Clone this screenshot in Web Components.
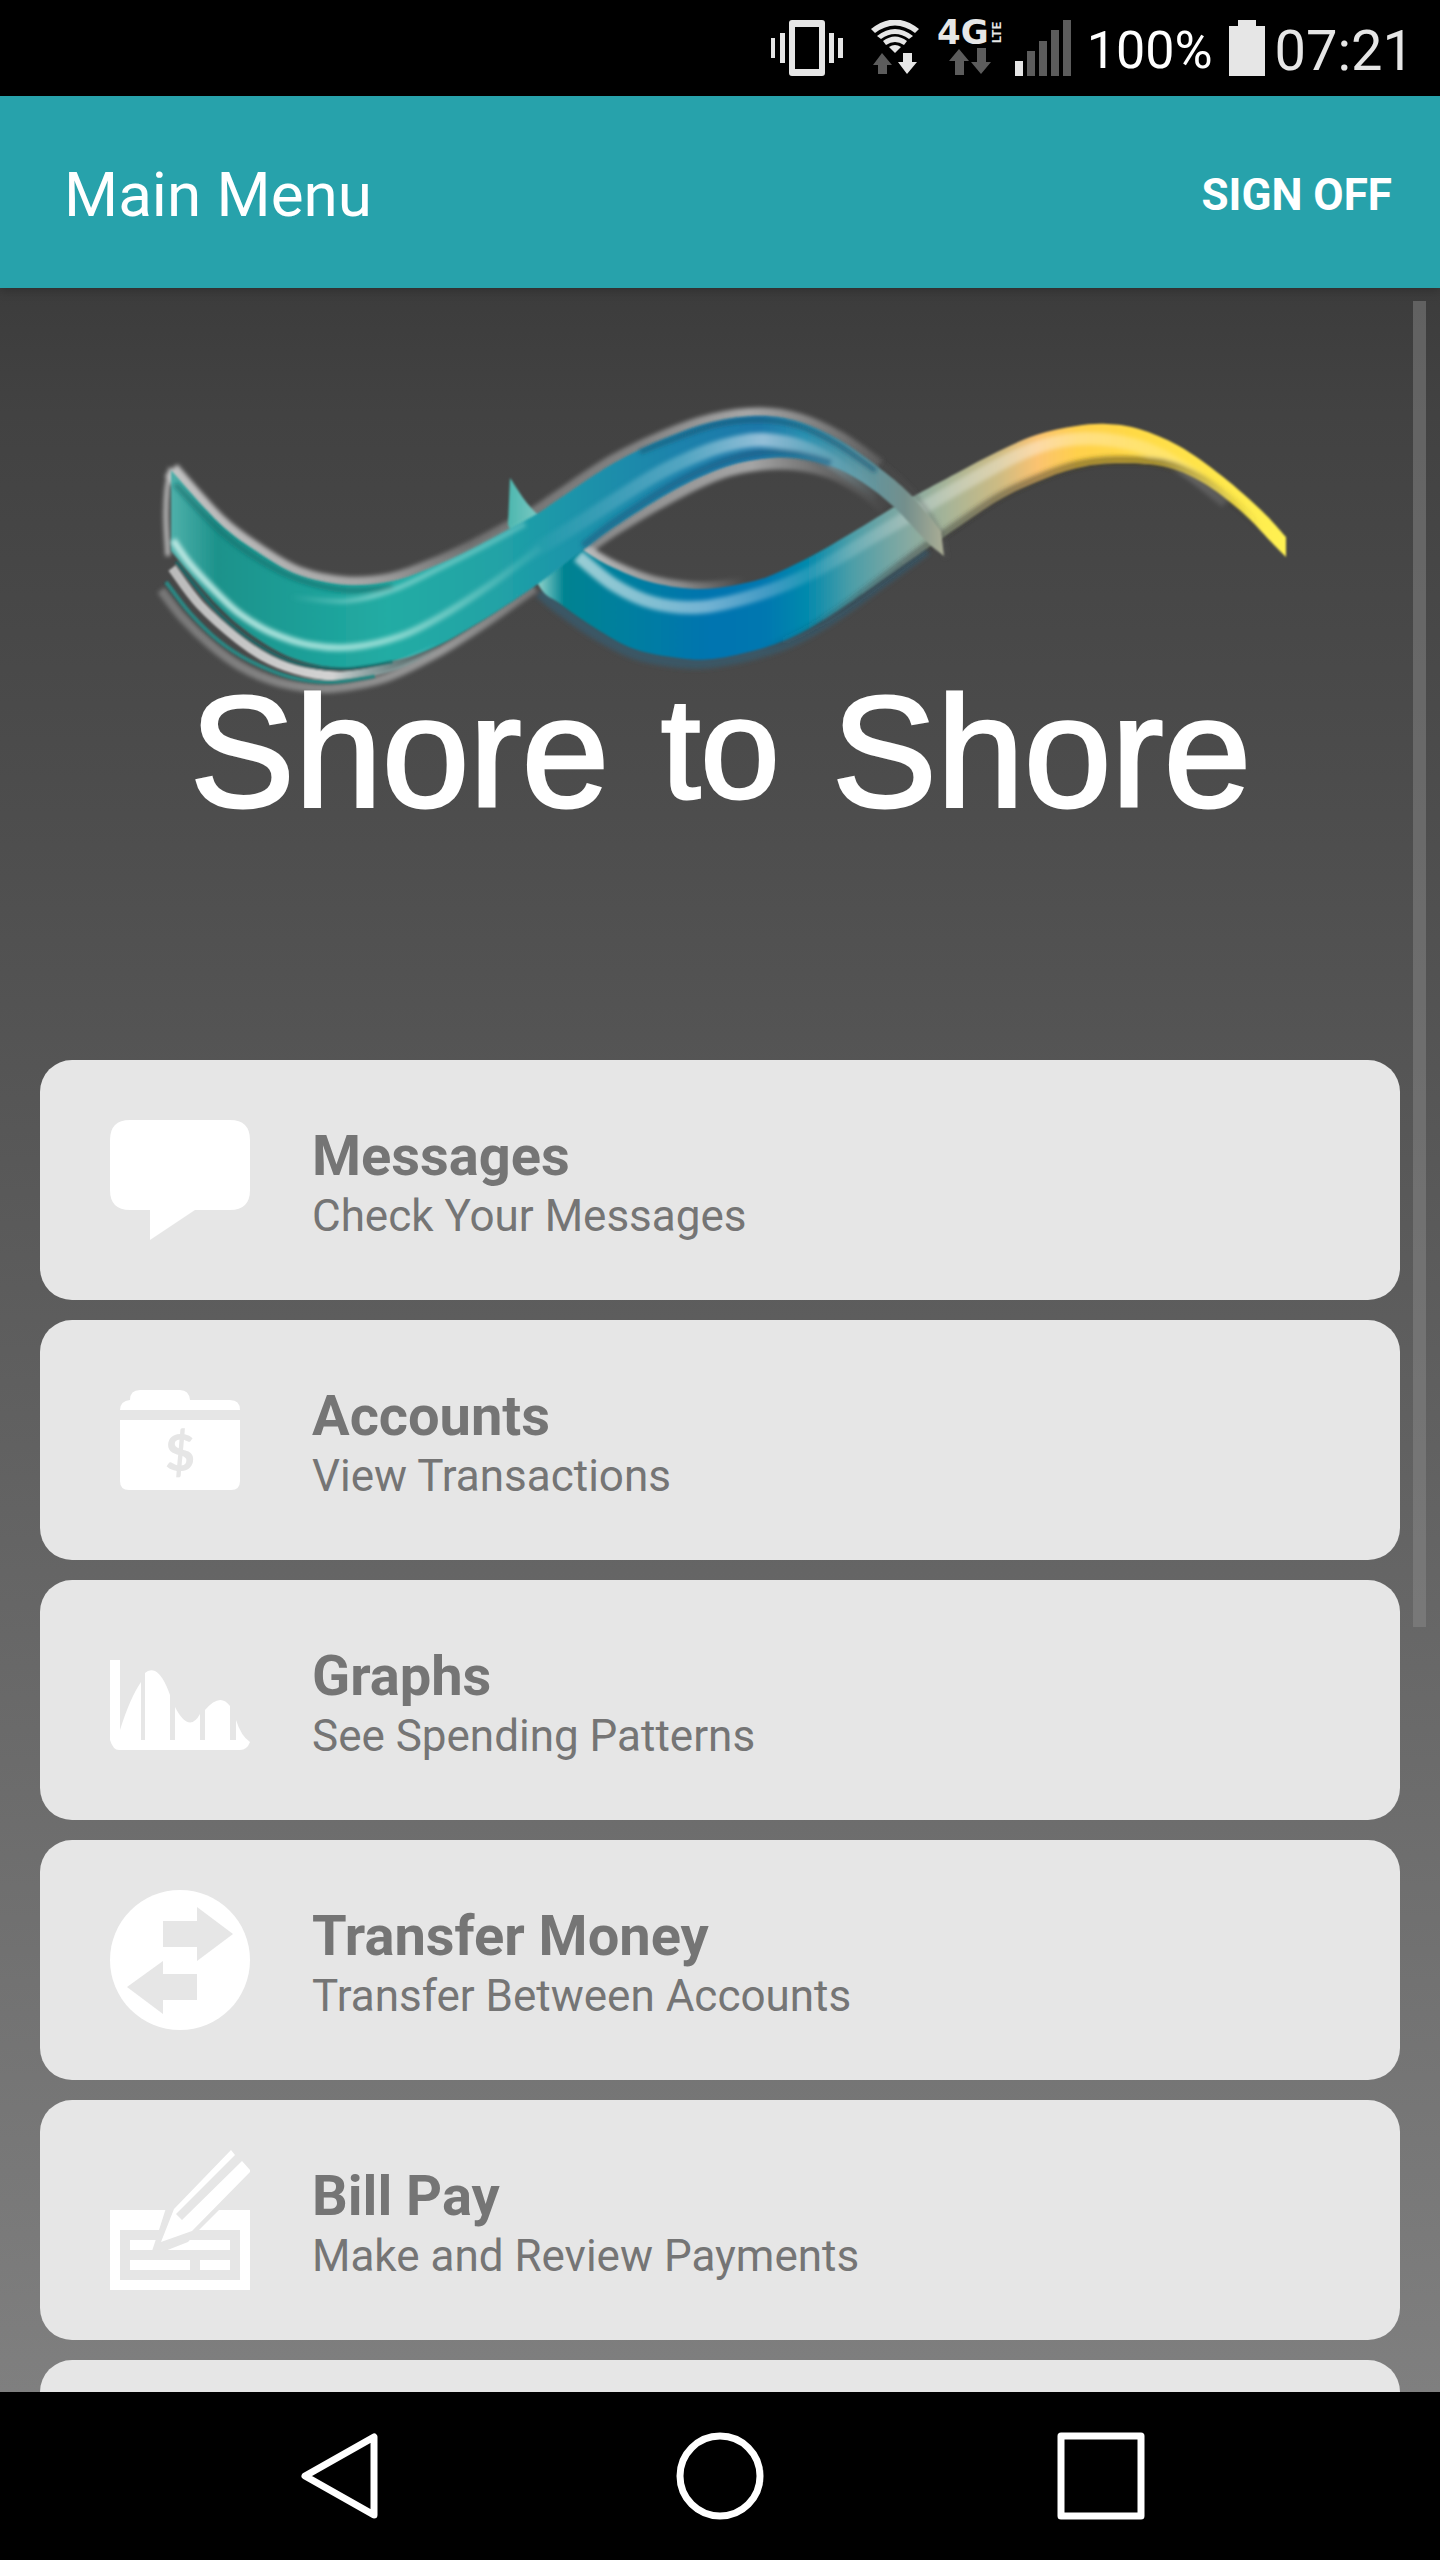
<!DOCTYPE html>
<html lang="en">
<head>
<meta charset="utf-8">
<meta name="viewport" content="width=device-width, initial-scale=1">
<title>Main Menu</title>
<style>
  body {
    margin: 0;
    background: #000;
    font-family: Roboto, "Noto Sans", sans-serif;
  }
</style>
</head>
<body>
<bank-app></bank-app>

<script>
const define = (name, html, setup) => {
  const template = document.createElement("template");
  template.innerHTML = html;
  customElements.define(name, class extends HTMLElement {
    constructor() {
      super();
      this.attachShadow({ mode: "open" });
      this.shadowRoot.appendChild(template.content.cloneNode(true));
      if (setup) setup(this.shadowRoot);
    }
  });
};

define("status-bar", /*html*/ `
  <style>
    :host {
      display: flex;
      flex: none;
      align-items: center;
      justify-content: flex-end;
      gap: 10px;
      height: 96px;
      padding-right: 26px;
      background: #000;
      color: #e6e6e6;
      fill: #e6e6e6;
    }
    svg { display: block; flex: none; }
    span { padding-top: 6px; }
    .off { fill: #5c5c5c; }
    .level { color: #fff; font-size: 52px; line-height: 60px; }
    .time { font-size: 56px; line-height: 64px; }
    .net { font: bold 34px "DejaVu Sans", sans-serif; }
    .lte { font: bold 13px Roboto, sans-serif; }
  </style>
  <svg width="88" height="56" viewBox="764 20 88 56" aria-label="Vibrate">
    <path d="M770 38h4v20h-4zM779 33h5v30h-5zM828 33h5v30h-5zM837 38h5v20h-5z"/>
    <path fill-rule="evenodd" d="M791 20h30q3 0 3 3v50q0 3-3 3h-30q-3 0-3-3v-50q0-3 3-3zM794 27v42h24v-42z"/>
  </svg>
  <svg width="64" height="56" viewBox="862 20 64 56" aria-label="Wi-Fi">
    <path d="M870 29q24-19 48 0l-4 4q-20-15-40 0z"/>
    <path d="M876 36q18-14 36 0l-4 3q-14-10-28 0z"/>
    <path d="M882 41q12-9 24 0l-3 4q-9-6-18 0z"/>
    <path d="M888 47q6-4 12 0l-6 6z"/>
    <path class="off" d="M881 53l10 12h-5v9h-9v-9h-5z"/>
    <path d="M902 53h9v9h5l-10 12-9-12h5z"/>
  </svg>
  <svg width="68" height="80" viewBox="936 8 68 80" aria-label="4G LTE">
    <text class="net" x="936" y="44">4G</text>
    <text class="lte" transform="translate(1000 43) rotate(-90)">LTE</text>
    <path class="off" d="M958 49l10 12h-5v14h-9v-14h-6zM976 48h9v14h5l-10 12-10-12h6z"/>
  </svg>
  <svg width="62" height="56" viewBox="1018 20 62 56" aria-label="Signal">
    <path d="M1018 61h8v15h-8z"/>
    <path class="off" d="M1030 51h8v25h-8zM1042 41h8v35h-8zM1054 30h8v46h-8zM1066 20h8v56h-8z"/>
  </svg>
  <span class="level">100%</span>
  <svg width="42" height="56" viewBox="1223 20 42 56" aria-label="Battery">
    <path d="M1238 20h18v6h9v50h-36v-50h9z"/>
  </svg>
  <span class="time">07:21</span>
`);

define("app-header", /*html*/ `
  <style>
    :host {
      display: flex;
      flex: none;
      align-items: center;
      justify-content: space-between;
      height: 192px;
      padding: 6px 48px 0 64px;
      box-sizing: border-box;
      background: #27a2ab;
      color: #fff;
      position: relative;
      z-index: 1;
      box-shadow: 0 2px 10px rgba(0, 0, 0, .25);
    }
    h1 { margin: 0; font-size: 62px; font-weight: 400; line-height: 72px; }
    button {
      border: 0;
      padding: 0;
      background: none;
      color: inherit;
      font: bold 44px/52px Roboto, sans-serif;
      text-transform: uppercase;
    }
  </style>
  <h1><slot></slot></h1>
  <button type="button">Sign Off</button>
`);

// smooth curve through a list of points, as cubic segments
const curve = (pts, start = "M") => {
  let d = start + pts[0];
  for (let i = 0; i < pts.length - 1; i++) {
    const p0 = pts[i - 1] || pts[i], p1 = pts[i], p2 = pts[i + 1], p3 = pts[i + 2] || p2;
    d += `C${p1[0] + (p2[0] - p0[0]) / 6},${p1[1] + (p2[1] - p0[1]) / 6} ` +
      `${p2[0] - (p3[0] - p1[0]) / 6},${p2[1] - (p3[1] - p1[1]) / 6} ${p2}`;
  }
  return d;
};

const tealTop = [[171,470],[219,523],[259,553],[298,575],[346,585],[393,581],[440,564],[480,545],[535,515],[559,499],[614,463],[666,438],[713,422],[760,416],[799,422],[839,440],[878,467],[910,494],[941,531]];
const tealBottom = [[944,556],[926,541],[894,507],[862,482],[831,466],[797,458],[760,459],[722,468],[674,490],[614,527],[583,550],[535,586],[480,622],[433,648],[393,661],[345,668],[298,660],[259,640],[219,607],[171,551]];
const sunTop = [[510,478],[535,512],[583,550],[614,568],[654,583],[702,589],[750,582],[779,572],[819,552],[858,529],[894,507],[914,496],[957,473],[997,452],[1036,435],[1076,426],[1107,424],[1139,429],[1179,446],[1222,476],[1262,511],[1286,537]];
const sunBottom = [[1286,557],[1274,545],[1242,512],[1202,482],[1163,466],[1115,463],[1076,468],[1036,482],[997,501],[945,536],[926,549],[878,583],[839,610],[799,634],[760,649],[713,659],[678,658],[634,649],[595,628],[559,603],[539,586],[508,525]];

const strokes = {
  haloLeft: [[168,556],[166,520],[167,490],[171,468]],
  haloTop: tealTop.slice(0, -2),
  haloInner: [[583,550],[614,528],[674,493],[722,471],[760,463],[797,463],[831,471],[862,488],[885,507]],
  haloBottom: [[161,590],[182,617],[211,645],[240,666],[271,680],[303,687],[335,688],[385,678],[437,653],[482,625],[535,588]],
  haloSun: [[583,549],[614,567],[654,582],[702,588],[745,583]],
  silver: [[172,568],[200,605],[239,640],[270,660],[305,672],[345,676],[397,665],[440,645]],
  tealThin: [[166,582],[190,613],[219,641],[250,661],[290,677],[330,682],[375,676]],
  darkTop: [[175,484],[221,532],[261,561],[300,580],[346,590],[393,587]],
  darkBottom: [[176,562],[219,614],[259,646],[298,664],[345,669],[393,662]],
  gleam: [[173,540],[190,564],[219,595],[240,614],[270,632],[310,645],[353,647],[401,636],[440,617],[490,585],[540,548]],
  gleamMid: [[290,597],[346,601],[393,590],[440,568],[480,548],[525,524]],
  gleamBlue: [[520,560],[583,521],[654,476],[705,452],[740,442],[766,440],[799,446],[831,461],[878,494]],
  humpTop: [[640,452],[668,441],[715,425],[760,420],[799,426],[837,444],[876,471]],
  humpInner: [[583,546],[616,521],[674,484],[722,462],[760,453],[797,454],[831,463]],
  gleamSun: [[578,556],[614,585],[654,603],[702,607],[759,594],[811,573],[878,534],[957,488],[1016,456],[1056,442],[1100,439],[1147,449],[1187,471],[1226,502]],
  shadeOuter: [[540,592],[559,608],[595,633],[634,653],[678,662],[713,662],[760,652],[799,637],[839,613],[880,583],[926,549]],
  shadeInner: [[760,650],[799,634],[839,610],[880,580],[926,546],[945,533],[997,498],[1036,479],[1076,465],[1115,460],[1163,463],[1202,479],[1240,508],[1262,531]],
  tailShadow: [[880,463],[908,487],[938,528],[946,558]]
};

define("brand-logo", /*html*/ `
  <style>
    :host { display: block; flex: none; }
    svg { display: block; width: 100%; height: auto; }
    path { fill: none; stroke-linejoin: round; }
    text {
      font-family: "Liberation Sans", Arial, sans-serif;
      fill: #fff;
      stroke: #fff;
      stroke-width: 3;
    }
  </style>
  <svg viewBox="0 288 1440 772" role="img" aria-label="Shore to Shore">
    <defs>
      <linearGradient id="teal" gradientUnits="userSpaceOnUse" x1="171" x2="944" y1="0" y2="0">
        <stop offset="0" stop-color="#4fb0aa"/>
        <stop offset=".06" stop-color="#1c928b"/>
        <stop offset=".28" stop-color="#21aca4"/>
        <stop offset=".42" stop-color="#20a3a6"/>
        <stop offset=".52" stop-color="#1f94aa"/>
        <stop offset=".66" stop-color="#1f82ac"/>
        <stop offset=".76" stop-color="#1c78aa"/>
        <stop offset=".82" stop-color="#2a90b0"/>
        <stop offset=".89" stop-color="#5c96a2"/>
        <stop offset=".95" stop-color="#748f8c"/>
        <stop offset="1" stop-color="#abad95"/>
      </linearGradient>
      <linearGradient id="sun" gradientUnits="userSpaceOnUse" x1="510" x2="1286" y1="0" y2="0">
        <stop offset="0" stop-color="#4fb8b0"/>
        <stop offset=".04" stop-color="#7fcac4"/>
        <stop offset=".07" stop-color="#008391"/>
        <stop offset=".15" stop-color="#007f9f"/>
        <stop offset=".26" stop-color="#0074b0"/>
        <stop offset=".33" stop-color="#0078b0"/>
        <stop offset=".38" stop-color="#0089ad"/>
        <stop offset=".44" stop-color="#4c9ea8"/>
        <stop offset=".51" stop-color="#84a9a2"/>
        <stop offset=".57" stop-color="#aab596"/>
        <stop offset=".63" stop-color="#cdbb83"/>
        <stop offset=".68" stop-color="#fbc370"/>
        <stop offset=".73" stop-color="#ffd04c"/>
        <stop offset=".8" stop-color="#ffd945"/>
        <stop offset="1" stop-color="#fff252"/>
      </linearGradient>
      <linearGradient id="halo" gradientUnits="userSpaceOnUse" x1="160" x2="895" y1="0" y2="0">
        <stop offset="0" stop-color="#c4c4c4"/>
        <stop offset=".28" stop-color="#a5a5a5"/>
        <stop offset=".42" stop-color="#707070"/>
        <stop offset=".65" stop-color="#838383"/>
        <stop offset=".8" stop-color="#a8a8a8"/>
        <stop offset="1" stop-color="#555"/>
      </linearGradient>
      <linearGradient id="haloLow" gradientUnits="userSpaceOnUse" x1="160" x2="535" y1="0" y2="0">
        <stop offset="0" stop-color="#777"/>
        <stop offset=".5" stop-color="#8c8c8c"/>
        <stop offset=".75" stop-color="#999"/>
        <stop offset="1" stop-color="#777"/>
      </linearGradient>
      <linearGradient id="fadeEnds" gradientUnits="userSpaceOnUse" x1="583" x2="890" y1="0" y2="0">
        <stop offset="0" stop-color="#888"/>
        <stop offset=".55" stop-color="#a5a5a5"/>
        <stop offset="1" stop-color="#888" stop-opacity="0"/>
      </linearGradient>
      <linearGradient id="fadeSun" gradientUnits="userSpaceOnUse" x1="583" x2="745" y1="0" y2="0">
        <stop offset="0" stop-color="#bbb"/>
        <stop offset=".6" stop-color="#8c8c8c"/>
        <stop offset="1" stop-color="#888" stop-opacity="0"/>
      </linearGradient>
      <linearGradient id="fadeRight" gradientUnits="userSpaceOnUse" x1="171" x2="560" y1="0" y2="0">
        <stop offset="0" stop-color="#b9e6e1"/>
        <stop offset=".55" stop-color="#8fdad2"/>
        <stop offset="1" stop-color="#8fdad2" stop-opacity="0"/>
      </linearGradient>
      <linearGradient id="midGleam" gradientUnits="userSpaceOnUse" x1="290" x2="525" y1="0" y2="0">
        <stop offset="0" stop-color="#8ad6d0" stop-opacity="0"/>
        <stop offset=".35" stop-color="#8ad6d0" stop-opacity=".8"/>
        <stop offset="1" stop-color="#8ad6d0" stop-opacity=".5"/>
      </linearGradient>
      <linearGradient id="silver" gradientUnits="userSpaceOnUse" x1="171" x2="440" y1="0" y2="0">
        <stop offset="0" stop-color="#bbb"/>
        <stop offset=".6" stop-color="#d3d3d3"/>
        <stop offset="1" stop-color="#7cc" stop-opacity="0"/>
      </linearGradient>
      <linearGradient id="blueGleam" gradientUnits="userSpaceOnUse" x1="520" x2="878" y1="0" y2="0">
        <stop offset="0" stop-color="#5fb4c4" stop-opacity="0"/>
        <stop offset=".45" stop-color="#58a9c4" stop-opacity=".9"/>
        <stop offset=".68" stop-color="#94bfd8"/>
        <stop offset="1" stop-color="#7fb0b8" stop-opacity="0"/>
      </linearGradient>
      <linearGradient id="sunGleam" gradientUnits="userSpaceOnUse" x1="575" x2="1230" y1="0" y2="0">
        <stop offset="0" stop-color="#fff" stop-opacity=".6"/>
        <stop offset=".2" stop-color="#fff" stop-opacity=".45"/>
        <stop offset=".36" stop-color="#fff" stop-opacity=".12"/>
        <stop offset=".7" stop-color="#fff" stop-opacity=".38"/>
        <stop offset="1" stop-color="#fff" stop-opacity=".1"/>
      </linearGradient>
      <linearGradient id="innerShade" gradientUnits="userSpaceOnUse" x1="760" x2="1262" y1="0" y2="0">
        <stop offset="0" stop-color="#333" stop-opacity="0"/>
        <stop offset=".3" stop-color="#333" stop-opacity=".45"/>
        <stop offset=".8" stop-color="#443a10" stop-opacity=".5"/>
        <stop offset="1" stop-color="#443a10" stop-opacity="0"/>
      </linearGradient>
      <filter id="soft" x="-10%" y="-20%" width="120%" height="140%"><feGaussianBlur stdDeviation="2"/></filter>
      <filter id="edge" x="-10%" y="-20%" width="120%" height="140%"><feGaussianBlur stdDeviation="1"/></filter>
    </defs>
    <g filter="url(#soft)">
      <path data-line="haloLeft" stroke="#b5b5b5" stroke-width="5"/>
      <path data-line="haloTop" stroke="url(#halo)" stroke-width="17"/>
      <path data-line="haloInner" stroke="url(#fadeEnds)" stroke-width="15"/>
      <path data-line="haloBottom" stroke="url(#haloLow)" stroke-width="9"/>
      <path data-line="haloSun" stroke="url(#fadeSun)" stroke-width="12"/>
      <path data-line="shadeOuter" stroke="#3b5665" stroke-width="12"/>
    </g>
    <g filter="url(#edge)">
      <path id="sunRibbon" style="fill: url(#sun)"/>
    </g>
    <g filter="url(#soft)">
      <path data-line="gleamSun" stroke="url(#sunGleam)" stroke-width="13"/>
      <path data-line="shadeInner" stroke="url(#innerShade)" stroke-width="8"/>
      <path data-line="tailShadow" stroke="#555" stroke-opacity=".3" stroke-width="5"/>
    </g>
    <g filter="url(#edge)">
      <path id="tealRibbon" style="fill: url(#teal)"/>
      <path data-line="silver" stroke="url(#silver)" stroke-width="9"/>
      <path data-line="tealThin" stroke="#2b8682" stroke-width="4"/>
      <path data-line="darkBottom" stroke="#12706f" stroke-opacity=".7" stroke-width="4"/>
    </g>
    <g filter="url(#soft)">
      <path data-line="darkTop" stroke="#146c69" stroke-opacity=".6" stroke-width="6"/>
      <path data-line="gleam" stroke="url(#fadeRight)" stroke-width="7"/>
      <path data-line="gleamMid" stroke="url(#midGleam)" stroke-width="5"/>
      <path data-line="gleamBlue" stroke="url(#blueGleam)" stroke-width="14"/>
      <path data-line="humpTop" stroke="#1b5a78" stroke-opacity=".7" stroke-width="5"/>
      <path data-line="humpInner" stroke="#1b5a80" stroke-opacity=".6" stroke-width="7"/>
    </g>
    <text x="190" y="806" font-size="157">Shore</text>
    <text x="661" y="798" font-size="142">to</text>
    <text x="832" y="806" font-size="157">Shore</text>
  </svg>
`, root => {
  root.querySelectorAll("[data-line]").forEach(p => p.setAttribute("d", curve(strokes[p.dataset.line])));
  root.querySelector("#tealRibbon").setAttribute("d", curve(tealTop) + curve(tealBottom, "L") + "Z");
  root.querySelector("#sunRibbon").setAttribute("d", curve(sunTop) + curve(sunBottom, "L") + "Z");
});

define("menu-card", /*html*/ `
  <style>
    :host { display: block; flex: none; }
    a {
      display: flex;
      align-items: center;
      gap: 62px;
      height: 240px;
      padding: 0 70px;
      box-sizing: border-box;
      border-radius: 32px;
      background: #e6e6e6;
      color: #757575;
      text-decoration: none;
    }
    .icon { display: flex; flex: none; width: 140px; height: 140px; }
    .text { padding-top: 8px; }
    .title { display: block; font-size: 56px; font-weight: bold; line-height: 64px; }
    .note { display: block; font-size: 44px; line-height: 56px; }
  </style>
  <a href="#">
    <span class="icon"><slot name="icon"></slot></span>
    <span class="text">
      <span class="title"><slot name="title"></slot></span>
      <span class="note"><slot></slot></span>
    </span>
  </a>
`);

define("nav-bar", /*html*/ `
  <style>
    :host {
      display: flex;
      flex: none;
      height: 168px;
      padding: 0 148px;
      background: #000;
    }
    button {
      flex: 1;
      display: flex;
      align-items: center;
      justify-content: center;
      border: 0;
      padding: 0;
      background: none;
    }
    svg { fill: none; stroke: #fff; stroke-width: 7; stroke-linejoin: round; }
  </style>
  <button type="button" aria-label="Back"><svg width="88" height="88"><path d="M10 44L79 5v78z"/></svg></button>
  <button type="button" aria-label="Home"><svg width="88" height="88"><circle cx="44" cy="44" r="40"/></svg></button>
  <button type="button" aria-label="Recent"><svg width="88" height="88"><path d="M4 4h80v80h-80z"/></svg></button>
`);

define("bank-app", /*html*/ `
  <style>
    :host {
      display: flex;
      flex-direction: column;
      height: 100vh;
    }
    main {
      position: relative;
      flex: 1;
      min-height: 0;
      overflow: hidden;
      background: linear-gradient(#3c3c3c, #424242 6%, #4d4d4d 25%, #7f7f7f);
    }
    nav {
      display: flex;
      flex-direction: column;
      gap: 20px;
      padding: 0 40px;
    }
    svg { width: 140px; height: 140px; fill: #fff; }
    .cut { fill: #e6e6e6; }
    .scroll {
      position: absolute;
      top: 13px;
      right: 14px;
      width: 13px;
      height: 63%;
      background: rgba(142, 142, 142, .45);
    }
  </style>
  <status-bar></status-bar>
  <app-header>Main Menu</app-header>
  <main>
    <brand-logo></brand-logo>
    <nav>
      <menu-card>
        <svg slot="icon" viewBox="0 0 140 140">
          <path d="M20 10h100q20 0 20 20v50q0 20-20 20H85l-45 30v-30H20q-20 0-20-20V30q0-20 20-20z"/>
        </svg>
        <span slot="title">Messages</span>Check Your Messages
      </menu-card>
      <menu-card>
        <svg slot="icon" viewBox="0 0 140 140">
          <path d="M10 40q0-9 10-10 0-10 10-10h40q9 0 10 10h40q10 0 10 10zM10 50h120v61q0 9-9 9H19q-9 0-9-9z"/>
          <text class="cut" x="70" y="101" text-anchor="middle" font-family="Lato" font-weight="900" font-size="51">$</text>
        </svg>
        <span slot="title">Accounts</span>View Transactions
      </menu-card>
      <menu-card>
        <svg slot="icon" viewBox="0 0 140 140">
          <path d="M0 30h10v70Q20 68 31 52v58h4V43q4-4 10-2 8 4 15 24v45h5V77q14 27 25 7v26h5V80q15-18 25-4v34h6V90q5 16 14 22-3 8-10 8H9q-6 0-9-10z"/>
        </svg>
        <span slot="title">Graphs</span>See Spending Patterns
      </menu-card>
      <menu-card>
        <svg slot="icon" viewBox="0 0 140 140">
          <circle cx="70" cy="70" r="70"/>
          <path class="cut" d="M53 31h34V17l36 27-36 27V57H53zM87 84H53V71L17 97l36 27v-14h34z"/>
        </svg>
        <span slot="title">Transfer Money</span>Transfer Between Accounts
      </menu-card>
      <menu-card>
        <svg slot="icon" viewBox="0 0 140 140">
          <path fill-rule="evenodd" d="M0 60h140v80H0zM10 80v50h120V80zM20 90h100v10H20zM20 110h60v10H20zM90 110h30v10H90z"/>
          <path class="cut" d="M56 58l-7 22-7 21h13l23-9 7-8 26-26z"/>
          <path d="M121 0l4 5-59 59 6 6 60-59 9 10-59 60-31 11 13-33z"/>
        </svg>
        <span slot="title">Bill Pay</span>Make and Review Payments
      </menu-card>
      <menu-card></menu-card>
    </nav>
    <div class="scroll"></div>
  </main>
  <nav-bar></nav-bar>
`);
</script>
</body>
</html>
